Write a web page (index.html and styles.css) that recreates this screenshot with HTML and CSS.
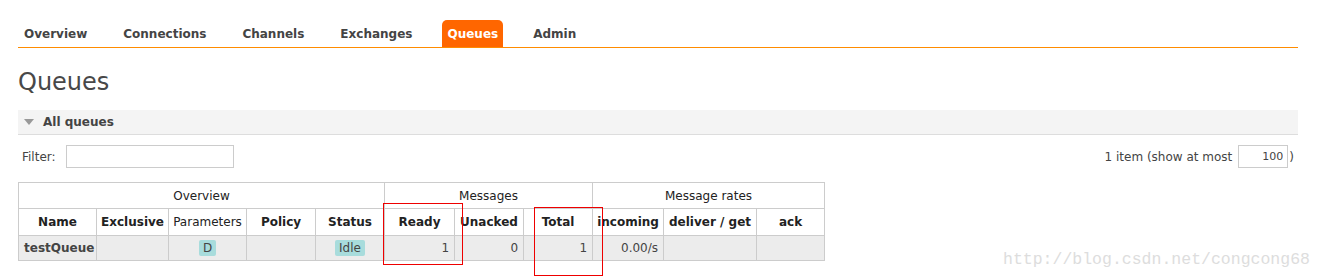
FILE: index.html
```html
<!DOCTYPE html>
<html lang="en">
<head>
   <meta charset="utf-8">
   <title>Queues</title>
   <link rel="stylesheet" href="styles.css">
</head>
<body>
   <div id="page">
      <ul id="tabs">
         <li><a href="#">Overview</a></li>
         <li><a href="#">Connections</a></li>
         <li><a href="#">Channels</a></li>
         <li><a href="#">Exchanges</a></li>
         <li><a href="#" class="selected">Queues</a></li>
         <li><a href="#">Admin</a></li>
      </ul>
      <h1>Queues</h1>
      <div class="section">
         <h2><span class="arrow"></span>All queues</h2>
         <div class="filter">
            <div class="filter-left">
               <label>Filter:</label>
               <input type="text" class="filter-box">
            </div>
            <div class="filter-right">
               1 item (show at most <input type="text" class="limit" value="100">)
            </div>
         </div>
         <table class="list">
            <colgroup>
               <col style="width: 78px">
               <col style="width: 72px">
               <col style="width: 78px">
               <col style="width: 69px">
               <col style="width: 69px">
               <col style="width: 70px">
               <col style="width: 69px">
               <col style="width: 69px">
               <col style="width: 71px">
               <col style="width: 93px">
               <col style="width: 68px">
            </colgroup>
            <tr class="group">
               <th colspan="5">Overview</th>
               <th colspan="3">Messages</th>
               <th colspan="3">Message rates</th>
            </tr>
            <tr>
               <th>Name</th>
               <th>Exclusive</th>
               <th class="plain">Parameters</th>
               <th>Policy</th>
               <th>Status</th>
               <th>Ready</th>
               <th>Unacked</th>
               <th>Total</th>
               <th>incoming</th>
               <th>deliver / get</th>
               <th>ack</th>
            </tr>
            <tr class="row">
               <td class="name">testQueue</td>
               <td></td>
               <td class="c"><span class="tag">D</span></td>
               <td></td>
               <td class="c"><span class="tag">Idle</span></td>
               <td class="r">1</td>
               <td class="r">0</td>
               <td class="r">1</td>
               <td class="r">0.00/s</td>
               <td></td>
               <td></td>
            </tr>
         </table>
      </div>
   </div>
   <div class="mark mark-ready"></div>
   <div class="mark mark-total"></div>
   <div class="watermark">http://blog.csdn.net/congcong68</div>
</body>
</html>
```

FILE: styles.css
```css
/* page */
body {
   margin: 0;
   font-family: "DejaVu Sans", Verdana, sans-serif;
   font-size: 12px;
   color: #444;
   background: white;
}
#page {
   width: 1280px;
   margin-left: 18px;
   padding-top: 20px;
}

/* tabs */
#tabs {
   list-style: none;
   margin: 0;
   padding: 0;
   display: flex;
   gap: 24px;
   border-bottom: 1px solid #ff8c00;
}
#tabs a {
   display: block;
   padding: 0 6px;
   height: 27px;
   line-height: 29px;
   font-weight: bold;
   font-size: 12px;
   color: #444;
   text-decoration: none;
   border-radius: 5px 5px 0 0;
}
#tabs a.selected {
   background: #f60;
   color: white;
   padding: 0 5px;
}

h1 {
   font-size: 24px;
   font-weight: normal;
   color: #484848;
   margin: 20px 0 14px;
   line-height: 28px;
}

/* section */
.section h2 {
   margin: 0;
   height: 24px;
   line-height: 25px;
   background: #f4f4f4;
   border-bottom: 1px solid #ddd;
   font-size: 12px;
   font-weight: bold;
   color: #444;
   padding-left: 6px;
   display: flex;
   align-items: center;
   gap: 9px;
}
.arrow {
   width: 0;
   height: 0;
   border-left: 5px solid transparent;
   border-right: 5px solid transparent;
   border-top: 6px solid #999;
}
.filter {
   display: flex;
   justify-content: space-between;
   align-items: center;
   padding: 10px 0 14px;
}
.filter-left {
   display: flex;
   align-items: center;
   padding-left: 4px;
   gap: 10px;
}
.filter-right {
   display: flex;
   align-items: center;
   padding-right: 4px;
}
input {
   font-family: "DejaVu Sans", Verdana, sans-serif;
   font-size: 11px;
   color: #444;
   border: 1px solid #ccc;
   box-sizing: border-box;
   height: 23px;
   margin: 0;
   padding: 0 4px;
}
.filter-box {
   width: 168px;
}
.limit {
   width: 50px;
   text-align: right;
   margin-left: 6px;
   margin-right: 1px;
}

/* table */
table.list {
   border-collapse: collapse;
   border: 1px solid #ccc;
   table-layout: fixed;
   width: 807px;
}
table.list th, table.list td {
   border: 1px solid #ccc;
   padding: 0 5px;
   white-space: nowrap;
   overflow: visible;
}
table.list tr.group th {
   font-weight: normal;
   height: 25px;
   font-size: 12px;
}
table.list th {
   font-weight: bold;
   height: 26px;
   text-align: center;
   color: #222;
   padding: 0 2px;
}
table.list th.plain {
   font-weight: normal;
}
table.list tr.row td {
   background: #ececec;
   height: 24px;
   color: #444;
}
td.name {
   font-weight: bold;
   color: #222;
}
td.c { text-align: center; }
td.r { text-align: right; }
.tag {
   display: inline-block;
   background: #a8dcdc;
   border-radius: 2px;
   padding: 1px 4px;
   line-height: 14px;
}

/* red markers drawn over the screenshot */
.mark {
   position: absolute;
   border: 1px solid #e00;
   box-sizing: border-box;
}
.mark-ready {
   left: 383px;
   top: 203px;
   width: 80px;
   height: 62px;
}
.mark-total {
   left: 534px;
   top: 207px;
   width: 69px;
   height: 69px;
}
.watermark {
   position: absolute;
   left: 1003px;
   top: 250px;
   font-family: "Liberation Mono", monospace;
   font-size: 16.5px;
   color: #ddd;
}
```
